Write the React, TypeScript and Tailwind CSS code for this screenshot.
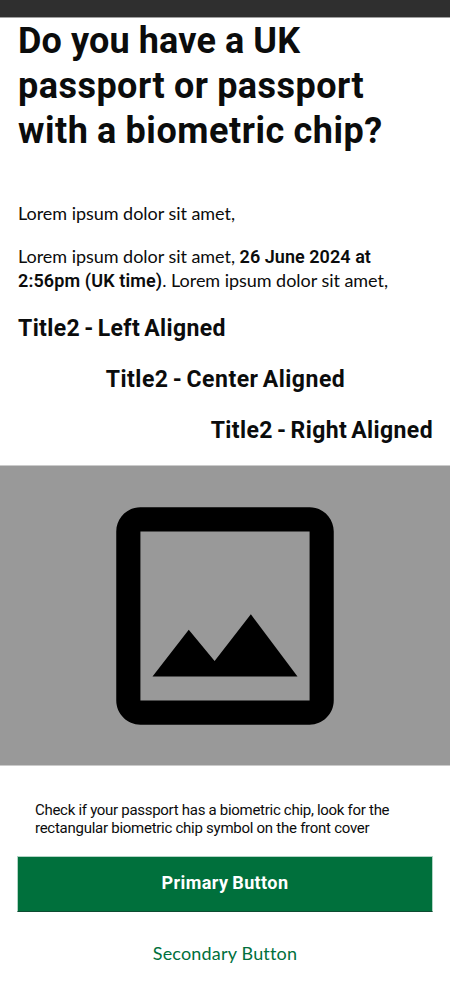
import type { ReactNode } from "react";

function Line({ className = "", children }: { className?: string; children: ReactNode }) {
  return <span className={`block whitespace-nowrap ${className}`}>{children}</span>;
}

function ImagePlaceholder() {
  return (
    <svg className="size-[290px]" viewBox="0 0 24 24" role="img" aria-label="Image">
      <path d="M19 5v14H5V5h14m0-2H5c-1.1 0-2 .9-2 2v14c0 1.1.9 2 2 2h14c1.1 0 2-.9 2-2V5c0-1.100-.9-2-2-2zm-4.860 8.860-3 3.870L9 13.140 6 17h12l-3.860-5.140z" />
    </svg>
  );
}

export default function App() {
  return (
    <div className="flex h-[1000px] w-[450px] flex-col overflow-hidden bg-white font-['Roboto',sans-serif] text-[#0b0c0c]">
      <div className="h-[17px] shrink-0 bg-[#2f2f2f]" />
      <div className="h-px shrink-0 bg-[#a0a0a0]" />
      <main className="flex flex-col">
        <h1 className="mt-px h-[135px] pl-[18px] text-[36px] leading-[45px] font-bold">
          <Line className="tracking-[0.2px] [word-spacing:-0.3px]">Do you have a UK</Line>
          <Line className="tracking-[0.47px] [word-spacing:-0.6px]">passport or passport</Line>
          <Line className="tracking-[0.53px] [word-spacing:-0.8px]">with a biometric chip?</Line>
        </h1>
        <p className="mt-[47px] pl-[18px] font-['Lato',sans-serif] text-[18px] leading-[24px] tracking-[-0.037px]">
          Lorem ipsum dolor sit amet,
        </p>
        <p className="mt-[19px] pl-[18px] font-['Lato',sans-serif] text-[18px] leading-[24px] tracking-[-0.037px]">
          <Line>
            Lorem ipsum dolor sit amet,{" "}
            <b className="font-['Roboto',sans-serif] leading-none font-semibold tracking-[0.05px]">26 June 2024 at</b>
          </Line>
          <Line>
            <b className="font-['Roboto',sans-serif] leading-none font-semibold tracking-[0.12px]">2:56pm (UK time)</b>. Lorem ipsum dolor sit amet,
          </Line>
        </p>
        <div className="mt-[22px] flex flex-col gap-[21px] px-[17px] text-[23px] leading-[30px] font-bold [word-spacing:-2px]">
          <h2 className="pl-px tracking-[0.38px]">Title2 - Left Aligned</h2>
          <h2 className="pl-px text-center tracking-[0.5px]">Title2 - Center Aligned</h2>
          <h2 className="text-right tracking-[0.39px]">Title2 - Right Aligned</h2>
        </div>
        <div className="mt-[19px] flex h-[301px] items-center justify-center border-y border-[#cbcbcb] bg-[#999999]">
          <ImagePlaceholder />
        </div>
        <p className="mt-[36px] pl-[35px] text-[15px] leading-[17.600px]">
          <Line className="tracking-[-0.290px]">Check if your passport has a biometric chip, look for the</Line>
          <Line className="tracking-[-0.265px]">rectangular biometric chip symbol on the front cover</Line>
        </p>
        <div className="mt-[18.800px] flex flex-col px-[17px]">
          <button className="flex h-[56px] items-start justify-center border border-[#b2d4c5] border-b-[#0e4b31] bg-[#00703c] pt-[14px] text-[18px] leading-[24px] font-bold tracking-[0.4px] text-white [word-spacing:-1px]">
            Primary Button
          </button>
          <button className="mt-[29px] text-center font-['Lato',sans-serif] text-[18px] leading-[24px] tracking-[0.180px] text-[#00703c]">
            Secondary Button
          </button>
        </div>
      </main>
    </div>
  );
}
